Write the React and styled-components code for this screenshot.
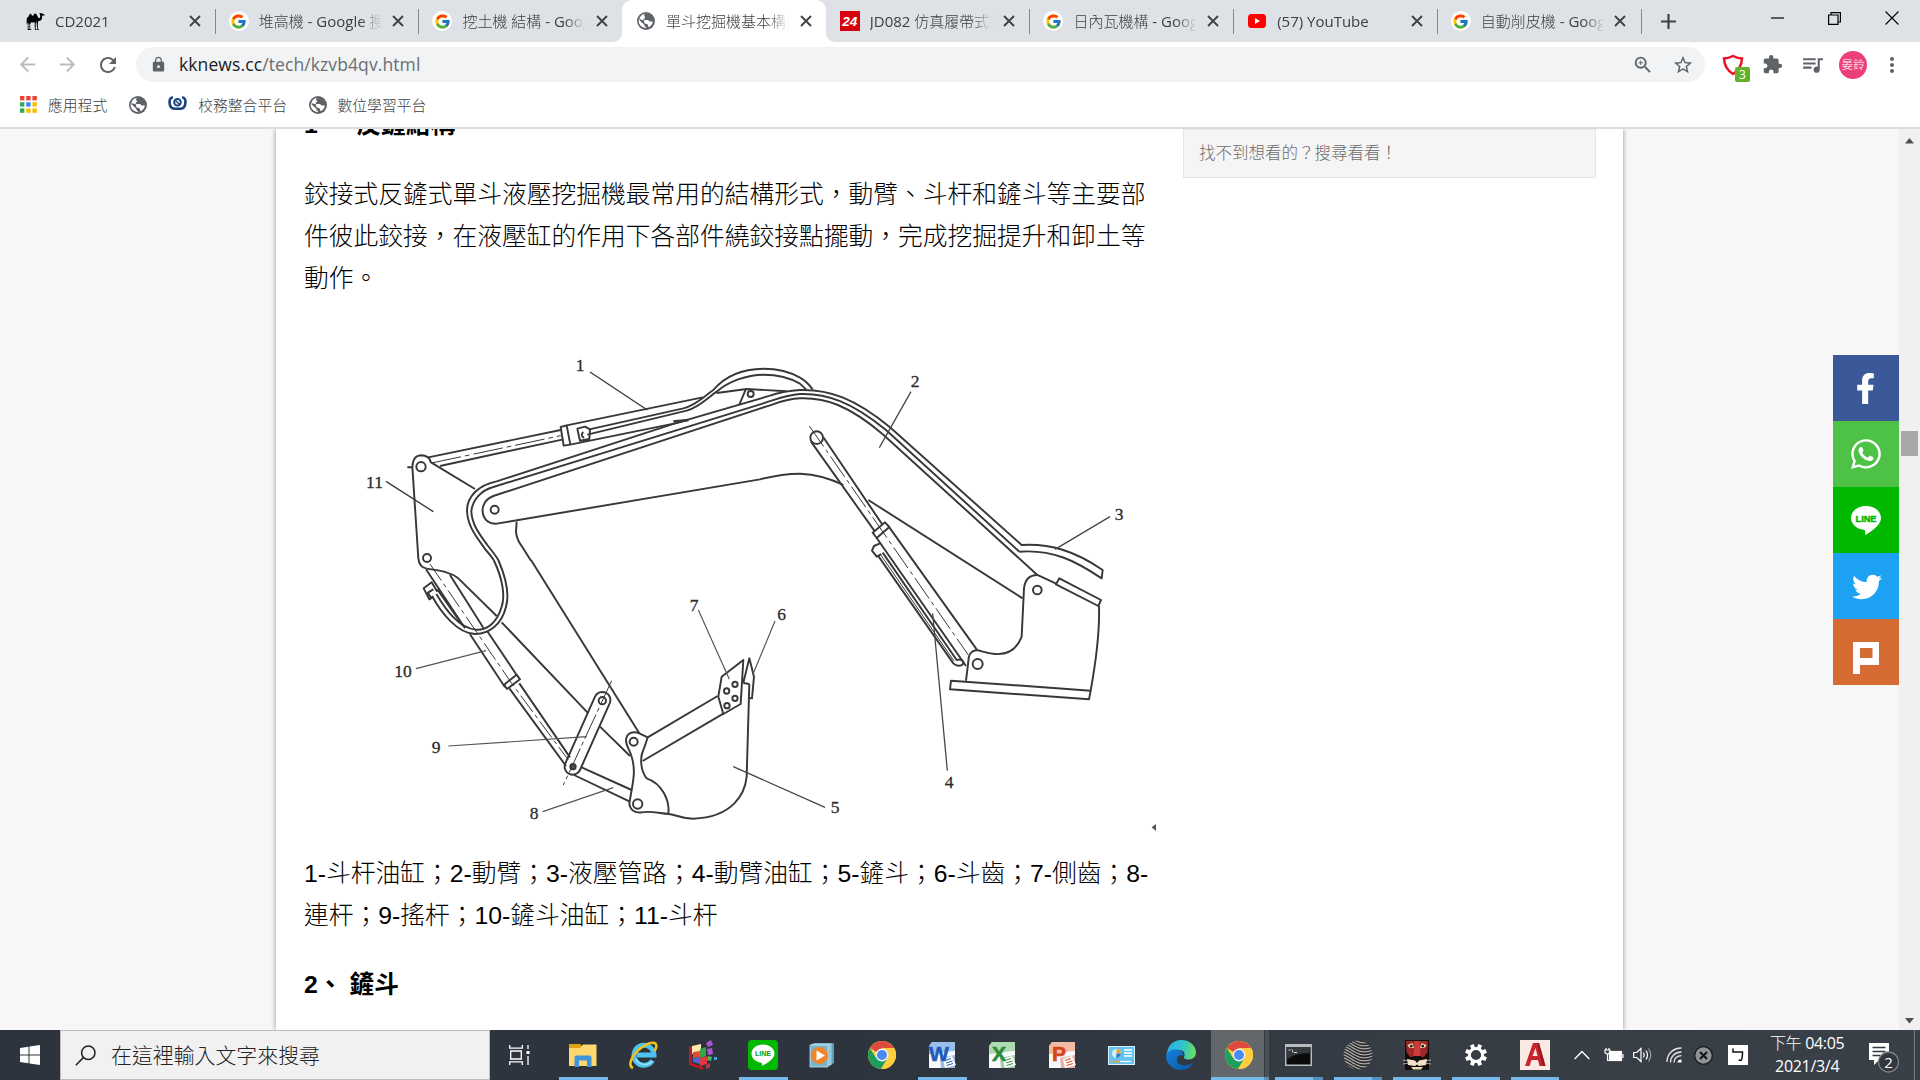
import React from "react";
import styled, { createGlobalStyle, css } from "styled-components";
import { FcGoogle } from "react-icons/fc";
import { FaFacebookF, FaWhatsapp, FaTwitter } from "react-icons/fa";
import { GiCamel } from "react-icons/gi";
import {
  MdArrowBack,
  MdArrowForward,
  MdRefresh,
  MdLock,
  MdZoomIn,
  MdStarBorder,
  MdExtension,
  MdQueueMusic,
  MdMoreVert,
} from "react-icons/md";

const Global = createGlobalStyle`
  * { box-sizing: border-box; }
  body { margin: 0; overflow: hidden; background: #fff; }
  svg { display: block; flex: none; }
`;

const uiFont = css`
  font-family: "Open Sans", "Noto Sans CJK TC Light", "Noto Sans CJK TC", sans-serif;
`;

const Desktop = styled.div`
  ${uiFont}
  width: 1920px;
  height: 1080px;
  display: flex;
  flex-direction: column;
  overflow: hidden;
  background: #fff;
`;

/* ---------- Tab strip ---------- */

const TabStrip = styled.div`
  display: flex;
  height: 42px;
  padding-left: 11px;
  background: #dee1e6;
`;

const Tab = styled.div`
  position: relative;
  display: flex;
  align-items: center;
  width: 203.7px;
  height: 42px;
  padding-left: 14px;
  background: ${(p) => (p.$active ? "#fff" : "transparent")};
  border-radius: 10px 10px 0 0;
  ${(p) =>
    p.$divider &&
    css`
      &::after {
        content: "";
        position: absolute;
        right: -1px;
        top: 9px;
        width: 1px;
        height: 25px;
        background: #85888d;
      }
    `}
  ${(p) =>
    p.$active &&
    css`
      &::before,
      &::after {
        content: "";
        position: absolute;
        bottom: 0;
        width: 9px;
        height: 9px;
      }
      &::before {
        left: -9px;
        background: radial-gradient(circle at 0 0, transparent 8.5px, #fff 9px);
      }
      &::after {
        right: -9px;
        background: radial-gradient(circle at 100% 0, transparent 8.5px, #fff 9px);
      }
    `}
`;

const Favicon = styled.div`
  display: flex;
  align-items: center;
  justify-content: center;
  width: 20px;
  height: 20px;
  flex: none;
  border-radius: ${(p) => (p.$round ? "50%" : "0")};
  background: ${(p) => p.$bg || "transparent"};
`;

const TabTitle = styled.div`
  width: 124px;
  margin-left: 10px;
  flex: none;
  overflow: hidden;
  white-space: nowrap;
  font-size: 15px;
  line-height: 22px;
  color: #3c4043;
  mask-image: linear-gradient(to right, #000 102px, transparent 123px);
`;

const CloseBox = styled.div`
  width: 20px;
  display: flex;
  justify-content: center;
  margin-left: 5.5px;
`;

const NewTab = styled.div`
  display: flex;
  align-items: center;
  padding-left: 20px;
`;

const WindowButtons = styled.div`
  display: flex;
  align-items: center;
  height: 36px;
  margin-left: auto;
`;

const WindowButton = styled.div`
  width: 57px;
  display: flex;
  justify-content: center;
`;

/* ---------- Toolbar ---------- */

const Toolbar = styled.div`
  display: flex;
  align-items: center;
  height: 45px;
  padding-left: 7px;
`;

const ToolButton = styled.div`
  position: relative;
  display: flex;
  align-items: center;
  justify-content: center;
  width: ${(p) => p.$w || 40}px;
  height: 35px;
  color: ${(p) => (p.$dim ? "#babcbe" : "#5f6368")};
`;

const Omnibox = styled.div`
  display: flex;
  align-items: center;
  width: 1569px;
  height: 35px;
  margin-left: 8px;
  padding-left: 14px;
  padding-right: 2px;
  border-radius: 18px;
  background: #f1f3f4;
  color: #5f6368;
`;

const Url = styled.div`
  flex: 1;
  margin-left: 12px;
  padding-bottom: 2px;
  font-size: 17.5px;
  letter-spacing: 0.1px;
  line-height: 26px;
  color: #6a6e73;
  white-space: nowrap;
`;

const UrlHost = styled.span`
  color: #202124;
`;

const ShieldSlot = styled(ToolButton)`
  padding-left: 9px;
`;

const ShieldBadge = styled.span`
  position: absolute;
  left: 30px;
  top: 20px;
  width: 15px;
  height: 15px;
  border-radius: 2px;
  background: #62b02c;
  color: #fff;
  font-size: 12px;
  line-height: 15px;
  text-align: center;
`;

const Avatar = styled.div`
  width: 28px;
  height: 28px;
  margin-left: 2px;
  border-radius: 50%;
  background: #ec407a;
  color: #fff;
  font-size: 11.5px;
  line-height: 28px;
  text-align: center;
  white-space: nowrap;
`;

/* ---------- Bookmarks ---------- */

const Bookmarks = styled.div`
  display: flex;
  align-items: center;
  height: 42px;
  padding: 0 0 5px 20px;
  border-bottom: 2px solid #dadce0;
`;

const Bookmark = styled.div`
  display: flex;
  align-items: center;
  gap: ${(p) => p.$gap || 11}px;
  margin-right: 21.5px;
  font-size: 14.8px;
  line-height: 22px;
  color: #3c4043;
  white-space: nowrap;
  font-weight: 300;
`;

/* ---------- Page ---------- */

const Viewport = styled.div`
  position: relative;
  display: flex;
  height: 901px;
  overflow: hidden;
  background: #f7f7f7;
`;

const Sheet = styled.main`
  display: flex;
  width: 1347px;
  height: 901px;
  margin-left: 276px;
  padding-left: 28px;
  background: #fff;
  box-shadow: 0 0 5px rgba(0, 0, 0, 0.42);
`;

const Article = styled.article`
  width: 852px;
  margin-top: -25px;
  font-family: "Liberation Sans", "Noto Sans CJK TC", sans-serif;
  font-size: 24.75px;
  line-height: 42px;
  color: #000;
`;

const Heading = styled.h3`
  margin: ${(p) => p.$margin || "0"};
  font-size: inherit;
  line-height: 42px;
  font-weight: 700;
`;

const Paragraph = styled.p`
  margin: ${(p) => p.$margin};
  font-weight: 300;
`;

const Figure = styled.figure`
  margin: 20px 0 0;
  height: 520px;
`;

const Aside = styled.aside`
  width: 413px;
  margin-left: 27px;
`;

const SiteSearch = styled.div`
  height: 49px;
  padding-left: 15px;
  border: 1px solid #e6e6e6;
  border-top-color: #ececec;
  background: #f5f5f5;
  color: #6c6c6c;
  font-family: "Liberation Sans", "Noto Sans CJK TC", sans-serif;
  font-size: 16.5px;
  font-weight: 300;
  line-height: 47px;
`;

const ScrollTrack = styled.div`
  display: flex;
  flex-direction: column;
  align-items: center;
  justify-content: space-between;
  width: 21px;
  height: 901px;
  margin-left: auto;
  padding: 9px 0 6px;
  background: #f0f0f0;
`;

const ScrollThumb = styled.div`
  width: 17px;
  height: 25px;
  margin-top: 287px;
  margin-bottom: auto;
  background: #a8a8a8;
`;

const ShareRail = styled.div`
  position: absolute;
  left: 1833px;
  top: 226px;
  display: flex;
  flex-direction: column;
`;

const ShareButton = styled.div`
  display: flex;
  align-items: center;
  justify-content: center;
  width: 66px;
  height: 66px;
  padding: ${(p) => p.$pad || "0"};
  color: #fff;
  background: ${(p) => p.$bg};
`;

/* ---------- Taskbar ---------- */

const Taskbar = styled.div`
  display: flex;
  height: 50px;
  background: linear-gradient(to right, #2d343e 0, #2d343e 45%, #373d45 75%, #3a4048 100%);
`;

const StartButton = styled.div`
  display: flex;
  align-items: center;
  justify-content: center;
  width: 60px;
`;

const TaskSearch = styled.div`
  display: flex;
  align-items: center;
  width: 430px;
  height: 50px;
  padding-left: 14px;
  gap: 15px;
  border: 1px solid #bcbcbc;
  background: #f1f1f1;
  color: #222;
  font-size: 20.9px;
  font-weight: 300;
  line-height: 30px;
  white-space: nowrap;
`;

const TaskItem = styled.div`
  position: relative;
  display: flex;
  align-items: center;
  justify-content: center;
  width: ${(p) => p.$w}px;
  height: 50px;
  padding-right: ${(p) => p.$pad || 0}px;
`;

const ActiveTask = styled(TaskItem)`
  background: linear-gradient(to right, #62676c 0 53px, #363b40 53px 54px, #4b5056 54px);
`;

const Underline = styled.span`
  position: absolute;
  bottom: 0;
  left: ${(p) => p.$left}px;
  width: ${(p) => p.$width}px;
  height: 3px;
  background: ${(p) =>
    p.$split
      ? `linear-gradient(to right, #76b9ed 0 ${p.$split}px, #5a8fb9 ${p.$split}px)`
      : "#76b9ed"};
`;

const TrayItem = styled.div`
  display: flex;
  align-items: center;
  justify-content: center;
  width: ${(p) => p.$w}px;
  height: 50px;
`;

const Clock = styled.div`
  width: 96px;
  padding-top: 2px;
  color: #fff;
  font-size: 16px;
  line-height: 22.5px;
  letter-spacing: -0.3px;
  text-align: center;
  white-space: nowrap;
`;

const ShowDesktop = styled.div`
  width: 6px;
  height: 50px;
  margin-left: auto;
  border-left: 1px solid #7a7f85;
`;

/* ---------- Small drawings ---------- */

const Cross = () => (
  <svg width="12" height="12" viewBox="0 0 12 12" stroke="#3f4347" strokeWidth="1.9">
    <path d="M1 1L11 11M11 1L1 11" />
  </svg>
);

const Globe = () => (
  <svg width="18" height="18" viewBox="0 0 18 18">
    <circle cx="9" cy="9" r="9" fill="#5f6368" />
    <path
      d="M9.7 1.8C7 2 6.4 3.4 7.6 4.4c1 .7.2 1.8-.6 2-.9.3-.6 1.6.5 1.6h3c1.400 0 1.500 1.500 2.400 1.500h2.900c-.2 2.700-2 4.800-4.200 5.700-.7-.8-.4-2-1-2.600-.8-.9-2.600-.5-3.300-1.600-.5-.9.300-1.900-.4-2.700L2 6.900A7.300 7.300 0 0 0 9 16.300v-1.400c-1.300-.2-1.700-1.300-1.700-2.200L2.400 8.200C2.300 4.600 5.600 1.500 9.700 1.800z"
      fill="#fff"
      fillRule="evenodd"
    />
  </svg>
);

const YouTubeIcon = () => (
  <svg width="18" height="14" viewBox="0 0 18 14">
    <rect width="18" height="14" rx="3.500" fill="#f00" />
    <path d="M7 4l5 3-5 3z" fill="#fff" />
  </svg>
);

const News24 = () => (
  <svg width="20" height="20" viewBox="0 0 20 20">
    <rect width="20" height="20" fill="#d7000f" />
    <text x="9.800" y="14.800" textAnchor="middle" fontFamily="Liberation Sans, sans-serif" fontWeight="700" fontStyle="italic" fontSize="13.500" fill="#fff">24</text>
  </svg>
);

const AppsGrid = () => (
  <svg width="17" height="17" viewBox="0 0 17 17">
    {["#ea4335", "#ea4335", "#ea4335", "#34a853", "#4285f4", "#fbbc05", "#34a853", "#fbbc05", "#fbbc05"].map((c, i) => (
      <rect key={i} x={(i % 3) * 6.200} y={Math.floor(i / 3) * 6.200} width="4.400" height="4.400" fill={c} />
    ))}
  </svg>
);

const SchoolIcon = () => (
  <svg width="19" height="17" viewBox="0 0 19 17" fill="none" stroke="#17427c">
    <path d="M5 1.500C0 1 .5 12 6 12.800h7C18.500 12 19 1 14 1.500" strokeWidth="2.600" />
    <circle cx="9.500" cy="6.300" r="3.300" strokeWidth="1.900" />
    <path d="M7.500 4.500l4 4" strokeWidth="1.500" />
  </svg>
);

const LineBubble = ({ size, green }) => (
  <svg width={size} height={size} viewBox="0 0 30 30">
    <path d="M15 1C6.700 1 0 6.300 0 13c0 6 5.500 10.800 12.700 11.800 1.500.3 1.700 1 1.300 4.200 0 .8.500 1 1.300.5C21 26 30 20 30 13 30 6.300 23.300 1 15 1z" fill="#fff" />
    <text x="15" y="16.600" textAnchor="middle" fontFamily="Liberation Sans, sans-serif" fontWeight="700" fontSize="9.500" textLength="21" lengthAdjust="spacingAndGlyphs" fill={green} stroke={green} strokeWidth=".5">LINE</text>
  </svg>
);

const PlurkIcon = () => (
  <svg width="26" height="32" viewBox="0 0 26 32">
    <path d="M0 0h26v23H7v9H0zM7 6v10h12.500V6z" fill="#fff" fillRule="evenodd" />
  </svg>
);

const ChromeIcon = () => (
  <svg width="28" height="28" viewBox="0 0 28 28">
    <circle cx="14" cy="14" r="14" fill="#ffcd40" />
    <path d="M14 14L1.900 7A14 14 0 0 1 26.100 7z" fill="#dd4b3e" />
    <path d="M1.900 7A14 14 0 0 0 13 28l6.500-11L14 14 8 17z" fill="#1a9f5c" />
    <path d="M14 7h12.100A14 14 0 0 1 13 28l7-10.500z" fill="#ffcd40" />
    <circle cx="14" cy="14" r="6.400" fill="#f4f4f4" />
    <circle cx="14" cy="14" r="5" fill="#4a8af4" />
  </svg>
);

const OfficeIcon = ({ letter, color, light }) => (
  <svg width="28" height="28" viewBox="0 0 28 28">
    <path d="M4 1h23v26H1V5z" fill="#f8fafc" />
    <path d="M4 1h23v9C18 10 12 13 1 13V5z" fill={light} opacity=".6" />
    <path d="M12 17l15-3v13H13z" fill={color} opacity=".4" />
    <path d="M15 18l9-3 4 9-11 3z" fill="#fff" />
    <path d="M17 19.500l6-2M18 22l6.500-2M18.500 24.500l6.500-2" stroke={color} strokeWidth="1" />
    <text x="11" y="20" textAnchor="middle" fontFamily="Liberation Sans, sans-serif" fontWeight="700" fontSize="21" fill={color} stroke={color} strokeWidth=".6">{letter}</text>
  </svg>
);

const FolderIcon = () => (
  <svg width="28" height="24" viewBox="0 0 28 24">
    <path d="M0 1h11l2 3h-1v19H1z" fill="#e4a20b" />
    <path d="M0 5h11l3-3.500h13.500V23H0z" fill="#fed76e" />
    <path d="M5.500 24V14.500q0-2 2-2h13q2 0 2 2V24h-4.500v-6.500h-8V24z" fill="#3f95d8" />
    <path d="M0 1h11l1.500 1.500L10.500 5H0z" fill="#e0a010" />
  </svg>
);

const ExplorerIcon = () => (
  <svg width="31" height="30" viewBox="0 0 31 30" fill="none">
    <path d="M24.500 20.500A10 10 0 1 1 26 15H9" stroke="#4cc3f0" strokeWidth="5" />
    <path d="M24 21A9.500 9.500 0 0 1 8 19" stroke="#9be4fb" strokeWidth="1.500" />
    <path d="M5 28C-2 25 6 12 16 6c8-5 14-4 12 2-.3 1-.8 2-1.500 3" stroke="#f3c11b" strokeWidth="2.600" />
  </svg>
);

const BlocksIcon = () => (
  <svg width="28" height="30" viewBox="0 0 28 30">
    <path d="M0 7l3-1v17l11 4v3L0 25z" fill="#b81c25" />
    <path d="M3 6l9-2v8l-9 2z" fill="#ffe9b0" />
    <path d="M4 12l7-1v6l-7 1z" fill="#e94b2d" />
    <path d="M11 9l6-2v9l-6 2z" fill="#35a548" />
    <path d="M4 18l7-1v7l-7-2z" fill="#4968d3" />
    <path d="M11 18l7-2v8l-7 2z" fill="#e03841" />
    <path d="M17 3l5-3 2 5-5 2zM18 9l5-1 1 6-5 1z" fill="#ad55d6" />
    <path d="M19 16l4 1-1 4-4-1z" fill="#49b857" />
    <rect x="25" y="17" width="3" height="3" fill="#37a6dc" />
    <path d="M17 25l4-2v4l-4 2z" fill="#bc3c46" />
  </svg>
);

const LineTaskIcon = () => (
  <svg width="30" height="30" viewBox="0 0 30 30">
    <rect width="30" height="30" rx="4" fill="#00b900" />
    <path d="M15 4.500C8.400 4.500 3.500 8.600 3.500 13.700c0 4.800 4.200 8 9.600 9 1 .3 1 1 .8 3 3.600-1.500 12.600-6.500 12.600-12 0-5.100-4.900-9.200-11.500-9.200z" fill="#fff" />
    <text x="15" y="16.300" textAnchor="middle" fontFamily="Liberation Sans, sans-serif" fontWeight="700" fontSize="7" textLength="16" lengthAdjust="spacingAndGlyphs" fill="#00a000">LINE</text>
  </svg>
);

const MediaIcon = () => (
  <svg width="26" height="26" viewBox="0 0 26 26">
    <path d="M5 1h19l1 1v19l-5 3H5z" fill="#5f9db9" />
    <path d="M3 2h19v21H3z" fill="#8dc3d8" stroke="#b9dfeb" strokeWidth=".7" />
    <path d="M1 3h18v22H1z" fill="#79b4cd" stroke="#c6e5ef" strokeWidth=".8" />
    <circle cx="10.500" cy="13.500" r="8.500" fill="#f18426" />
    <path d="M7.500 8.500l8.500 5-8.500 5z" fill="#fff" />
  </svg>
);

const PanelIcon = () => (
  <svg width="27" height="19" viewBox="0 0 27 19">
    <rect x=".5" y=".5" width="26" height="18" fill="#63c4f5" stroke="#d9f0fb" />
    <circle cx="8.500" cy="7.500" r="4.500" fill="#d9f0fb" />
    <path d="M8.500 7.500V3a4.500 4.500 0 0 1 4.500 4.500z" fill="#f1a42b" />
    <path d="M8.500 7.500L13 7.500A4.500 4.500 0 0 1 8 12z" fill="#2a7fc0" />
    <path d="M16 4h8M16 7h8M16 10h8" stroke="#fff" strokeWidth="1.400" />
    <path d="M3 15.500h8" stroke="#f1a42b" strokeWidth="1.500" />
    <path d="M12 15.500h11" stroke="#fff" strokeWidth="1.200" />
  </svg>
);

const EdgeIcon = () => (
  <svg width="30" height="30" viewBox="0 0 30 30">
    <defs>
      <linearGradient id="edgeTop" x1="0" y1=".3" x2="1" y2=".4">
        <stop offset="0" stopColor="#2bb1e8" />
        <stop offset=".55" stopColor="#2fc3d0" />
        <stop offset="1" stopColor="#6be05a" />
      </linearGradient>
      <linearGradient id="edgeLow" x1="0" y1="0" x2="1" y2="1">
        <stop offset="0" stopColor="#1580d8" />
        <stop offset="1" stopColor="#0d57a8" />
      </linearGradient>
    </defs>
    <path d="M1 13C2 5 8 0 15 0c9 0 15 6 15 12.500 0 4.500-3.500 7-7.500 7-3 0-5-1.200-4.500-2.500 1.500-2.500.5-7-5-7C7 10 2 12 0 17z" fill="url(#edgeTop)" />
    <path d="M0 16C2 10 8 9 12 9.800c4 .7 6 4.200 5 6.200-1.500-2-6-1-6 3.500 0 5.500 7 8 16 3.500C24 28 20 30 15 30 6 30 0 23 0 16z" fill="url(#edgeLow)" />
  </svg>
);

const ConsoleIcon = () => (
  <svg width="27" height="22" viewBox="0 0 27 22">
    <rect width="27" height="22" fill="#b9bcbf" />
    <rect x="1.500" y="3" width="24" height="17.500" fill="#0b0b0b" />
    <path d="M1.500 3h24v6C14 9 6 12 1.500 16z" fill="#36393c" />
    <path d="M3.500 6h2M7 5.500l1 3M9 8.500h3" stroke="#ddd" strokeWidth="1" />
  </svg>
);

const SphereIcon = () => (
  <svg width="30" height="30" viewBox="0 0 30 30">
    <defs>
      <clipPath id="ball"><circle cx="15" cy="15" r="14.500" /></clipPath>
    </defs>
    <circle cx="15" cy="15" r="14.500" fill="#2a2a2a" />
    <g clipPath="url(#ball)" fill="none" stroke="#aaa" strokeWidth="1.200">
      {[-2, -1, 0, 1, 2, 3, 4, 5, 6, 7, 8, 9].map((n) => (
        <path key={n} d={`M-4 ${n * 3}C6 ${n * 3 - 4} 12 ${n * 3 + 16} 32 ${n * 3 + 6}`} />
      ))}
    </g>
  </svg>
);

const LionIcon = () => (
  <svg width="28" height="30" viewBox="0 0 28 30">
    <rect x="2" width="24" height="30" fill="#160c0b" />
    <path d="M3 1h22l-.5 11-3.500 5h-4l-1 2h-4l-1-2H7l-3.500-5z" fill="#9c2828" />
    <path d="M11.500 1h5l1 16h-7z" fill="#cc3a3a" />
    <path d="M4.500 5l5-2 1.500 5-5-.5zM23.500 5l-5-2L17 8l5-.5z" fill="#ead7b0" />
    <circle cx="8.300" cy="6" r="1.300" fill="#111" />
    <circle cx="19.700" cy="6" r="1.300" fill="#111" />
    <path d="M9.500 16h9l-2.500 4.500h-4z" fill="#111" />
    <path d="M4 19l8 1.500 2 2.500 2-2.500 8-1.500-1 6-7 1-2-1.500-2 1.500-7-1z" fill="#f1e4c6" />
    <path d="M8 27h12l-2 2.500h-8z" fill="#e8d7b5" />
    <path d="M0 20l6 1M0 24l6-1M28 20l-6 1M28 24l-6-1" stroke="#ddd" strokeWidth=".7" />
  </svg>
);

const GearIcon = () => (
  <svg width="24" height="24" viewBox="0 0 24 24">
    {[0, 45, 90, 135, 180, 225, 270, 315].map((a) => (
      <rect key={a} x="10" y="1" width="4" height="5" fill="#fff" transform={`rotate(${a + 22.500} 12 12)`} />
    ))}
    <circle cx="12" cy="12" r="6.600" fill="none" stroke="#fff" strokeWidth="3" />
  </svg>
);

const AutoCadIcon = () => (
  <svg width="30" height="30" viewBox="0 0 30 30">
    <rect width="30" height="30" fill="#fbe9e3" />
    <path d="M5 26L13 3h6l6.500 23h-6l-1.500-6h-6.500l-2 6zM12.500 16h5L15.500 8z" fill="#c8252c" fillRule="evenodd" />
    <path d="M17 3h2l6.500 23h-3z" fill="#961a20" />
  </svg>
);

/* ---------- Excavator linkage drawing ---------- */

const Excavator = () => (
  <svg width="852" height="520" viewBox="304 320 852 520" fill="none" stroke="#383838" strokeWidth="5.800" strokeLinejoin="round">
    {/* stick cylinder, rear plate and left half of the boom */}
    <g transform="translate(350 340) scale(.33333)">
      <path d="M1350 175C1310 177 1290 186 1250 199L430 468C405 478 396 498 398 515C400 540 418 552 440 551L1230 418C1280 405 1310 401 1350 401" />
      <path d="M1350 150C1315 152 1295 155 1260 167L975 250L440 424C385 435 352 470 351 510C352 560 380 590 405 627Q425 650 431 660" />
      <path d="M1350 162C1305 165 1280 178 1240 190L430 441C395 450 366 480 364 515C366 555 390 585 412 615Q438 648 445 660" />
      <circle cx="434" cy="509" r="12" />
      <path d="M243 368C240 355 232 346 213 346C196 347 184 360 188 395L205 655C207 675 215 683 230 686M243 367L375 447M172 382H190" />
      <circle cx="213" cy="380" r="14" />
      <circle cx="231" cy="654" r="12" />
      <path d="M235 352L632 270M270 378L640 298" />
      <path d="M245 369L632 287" strokeWidth="3" strokeDasharray="90 12 14 12" />
      <path d="M632 261L650 256L661 314L641 317ZM650 256L1058 172M661 314L975 250L1015 240M682 266L705 260L720 268L718 297L690 302ZM700 276Q690 284 702 294" />
      <path d="M718 268L1000 205C1040 195 1060 170 1090 150C1125 108 1180 87 1240 86C1290 86 1325 98 1350 113" />
      <path d="M712 284L1010 212C1050 200 1070 175 1100 155C1135 125 1190 104 1240 104C1290 104 1325 116 1350 131" />
      <path d="M970 244L1015 240" strokeWidth="7" />
      <path d="M1100 159L1190 147L1310 154M1187 149L1168 194" />
      <circle cx="1202" cy="162" r="9" />
      <path d="M500 545L498 575C500 600 508 608 515 618L543 662" />
      <path d="M720 96L892 210M108 424L250 515" strokeWidth="4" />
    </g>
    {/* bucket, links and bucket cylinder */}
    <g transform="translate(350 560) scale(.33333)">
      <path d="M445 0C475 70 477 110 468 140C455 195 415 223 375 222C320 220 272 155 246 108" />
      <path d="M431 0C460 60 465 110 455 140C440 190 410 211 378 209C325 205 285 145 259 102" />
      <path d="M262 95L245 67L221 85L238 118L250 110M250 88L234 98L242 112" />
      <path d="M230 26C270 32 300 35 325 55L440 168M455 187L715 460M750 500L840 588" />
      <path d="M228 28L345 205M360 223L465 382M300 45L400 203M413 215L500 345M262 88L338 196" />
      <path d="M240 12L485 370L655 600" strokeWidth="3" strokeDasharray="60 12 12 12" />
      <path d="M462 374L500 344L510 358L471 387Z" />
      <path d="M478 385L648 618M508 370L660 592" />
      <path d="M779 430L690 630A24 24 0 0 1 646 610L735 410A24 24 0 0 1 779 430Z" />
      <circle cx="757" cy="422" r="11" />
      <circle cx="669" cy="620" r="8" fill="#555" />
      <path d="M785 362L640 675" strokeWidth="3" strokeDasharray="80 10 12 10" />
      <path d="M695 622L845 690M672 645L838 724M543 0L868 520" />
      <path d="M893 532L868 520C850 512 830 518 828 540C828 560 840 570 845 590C857 630 850 660 845 690L838 730C840 750 855 760 875 757C900 752 930 760 955 762C960 720 935 670 890 655C870 630 870 590 880 570C888 550 890 540 893 532Z" />
      <circle cx="851" cy="545" r="12" />
      <circle cx="863" cy="732" r="14" />
      <path d="M893 532L1103 408M878 603L1120 461M1198 372L1190 650C1185 700 1150 772 1030 776C990 776 975 762 955 762" />
      <path d="M1180 300L1115 350L1105 410L1120 462L1172 432ZM1180 368L1198 295L1212 350L1206 415L1198 415M1180 369L1198 372" />
      {[[1130, 393], [1155, 373], [1131, 437], [1155, 415]].map(([x, y]) => (
        <circle key={`${x}-${y}`} cx={x} cy={y} r="8" />
      ))}
      <path d="M198 326L408 272M295 558L710 530M578 755L790 683M1045 150L1138 358M1275 183L1208 345" strokeWidth="3.500" stroke="#555" />
    </g>
    {/* right half of the boom, boom cylinder and base bracket */}
    <g transform="translate(750 350) scale(.33333)">
      <path d="M150 83Q170 94 188 118M150 101L168 118" />
      <path d="M150 120C235 117 315 145 420 232L815 585C900 580 975 603 1058 660L1055 685C975 632 910 598 808 605" />
      <path d="M150 132C230 129 305 156 408 240L808 605" />
      <path d="M150 145C225 142 295 165 400 254L862 675" />
      <path d="M150 371C200 373 240 385 280 405M355 450L818 745" />
      <circle cx="200" cy="263" r="19" />
      <path d="M183 275L375 545M220 262L398 525M368 548L405 517L418 531L380 564ZM380 564L648 948M418 532L680 898" />
      <path d="M178 228L655 915" strokeWidth="3" strokeDasharray="75 12 12 12" />
      <path d="M390 580L372 588L366 602L380 620L394 612M384 617L610 940C622 952 642 948 640 935M398 608L620 930Q634 925 640 935" />
      <path d="M391 613L612 933" strokeWidth="3" />
      <path d="M920 702L862 675C835 675 825 690 822 715L815 860C800 900 770 915 735 912C710 910 695 903 680 900C660 903 655 915 655 935L648 992M928 685L1053 750L1045 768L918 703ZM1047 768C1050 860 1035 950 1022 1022M603 992L1022 1022L1017 1048L600 1018Z" />
      <circle cx="862" cy="720" r="13" />
      <circle cx="683" cy="942" r="15" />
      <path d="M483 125L388 293M1080 500L915 598M548 790L592 1262M-50 1250L225 1372" strokeWidth="3.800" stroke="#444" />
      <path d="M1205 1432L1218 1422V1443Z" fill="#555" stroke="none" />
    </g>
    <g fill="#2b2b2b" stroke="#2b2b2b" strokeWidth=".3" fontFamily="Liberation Serif, serif" fontSize="17.500" textAnchor="middle">
      <text x="580" y="371">1</text>
      <text x="915" y="387">2</text>
      <text x="1119" y="520">3</text>
      <text x="949" y="788">4</text>
      <text x="835" y="813">5</text>
      <text x="781.500" y="620">6</text>
      <text x="694" y="611">7</text>
      <text x="534" y="819">8</text>
      <text x="436" y="752.500">9</text>
      <text x="403" y="677">10</text>
      <text x="374.500" y="487.500">11</text>
    </g>
  </svg>
);

/* ---------- Data ---------- */

const google = { icon: <FcGoogle size={17} />, bg: "#fff", round: true };
const tabs = [
  { title: "CD2021", icon: <GiCamel size={19} color="#000" />, divider: true },
  { title: "堆高機 - Google 搜尋", ...google, divider: true },
  { title: "挖土機 結構 - Google 搜尋", ...google },
  { title: "單斗挖掘機基本構造", icon: <Globe />, active: true },
  { title: "JD082 仿真履帶式挖", icon: <News24 />, divider: true },
  { title: "日內瓦機構 - Google 搜尋", ...google, divider: true },
  { title: "(57) YouTube", icon: <YouTubeIcon />, divider: true },
  { title: "自動削皮機 - Google 搜尋", ...google, divider: true },
];

const tasks = [
  { icon: <FolderIcon />, line: true },
  { icon: <ExplorerIcon /> },
  { icon: <BlocksIcon /> },
  { icon: <LineTaskIcon />, line: true },
  { icon: <MediaIcon /> },
  { icon: <ChromeIcon /> },
  { icon: <OfficeIcon letter="W" color="#1f5bb5" light="#5d97dd" />, line: true },
  { icon: <OfficeIcon letter="X" color="#2f8a3a" light="#7cc47f" /> },
  { icon: <OfficeIcon letter="P" color="#d2471d" light="#f0906a" /> },
  { icon: <PanelIcon /> },
  { icon: <EdgeIcon /> },
];

const laterTasks = [
  { icon: <ConsoleIcon />, left: 6, width: 48, split: 38 },
  { icon: <SphereIcon />, left: 6, width: 48, split: 38 },
  { icon: <LionIcon />, left: 6, width: 48 },
  { icon: <GearIcon />, left: 6, width: 48 },
  { icon: <AutoCadIcon />, left: 6, width: 48 },
];

export default function App() {
  return (
    <Desktop lang="zh-Hant-TW">
      <Global />
      <TabStrip>
        {tabs.map((t) => (
          <Tab key={t.title} $active={t.active} $divider={t.divider}>
            <Favicon $bg={t.bg} $round={t.round}>{t.icon}</Favicon>
            <TabTitle>{t.title}</TabTitle>
            <CloseBox><Cross /></CloseBox>
          </Tab>
        ))}
        <NewTab>
          <svg width="15" height="15" viewBox="0 0 15 15" stroke="#3f4347" strokeWidth="2.200">
            <path d="M7.500 0V15M0 7.500H15" />
          </svg>
        </NewTab>
        <WindowButtons>
          <WindowButton>
            <svg width="13" height="13" viewBox="0 0 13 13"><path d="M0 6h13" stroke="#000" strokeWidth="1.200" /></svg>
          </WindowButton>
          <WindowButton>
            <svg width="13" height="13" viewBox="0 0 13 13" fill="none" stroke="#000" strokeWidth="1.200">
              <path d="M.6 3h9.400v9.400H.6zM3 3V.6h9.400V10H10" />
            </svg>
          </WindowButton>
          <WindowButton>
            <svg width="14" height="14" viewBox="0 0 14 14" stroke="#000" strokeWidth="1.100"><path d="M.5.5l13 13M13.500.5l-13 13" /></svg>
          </WindowButton>
        </WindowButtons>
      </TabStrip>

      <Toolbar>
        <ToolButton $dim><MdArrowBack size={23} /></ToolButton>
        <ToolButton $dim><MdArrowForward size={23} /></ToolButton>
        <ToolButton $w={41}><MdRefresh size={24} /></ToolButton>
        <Omnibox>
          <MdLock size={17} />
          <Url><UrlHost>kknews.cc</UrlHost>/tech/kzvb4qv.html</Url>
          <ToolButton><MdZoomIn size={22} /></ToolButton>
          <ToolButton><MdStarBorder size={22} /></ToolButton>
        </Omnibox>
        <ShieldSlot $w={47}>
          <svg width="22" height="22" viewBox="0 0 22 22" fill="none" stroke="#ea1226" strokeWidth="2.500">
            <path d="M11 20C6 17 2.500 13 2 4.500C6 4.500 8 3.500 11 2C14 3.500 16 4.500 20 4.500C19.500 13 16 17 11 20Z" />
          </svg>
          <ShieldBadge>3</ShieldBadge>
        </ShieldSlot>
        <ToolButton><MdExtension size={21} /></ToolButton>
        <ToolButton><MdQueueMusic size={25} /></ToolButton>
        <ToolButton><Avatar>晏鈴</Avatar></ToolButton>
        <ToolButton><MdMoreVert size={24} /></ToolButton>
      </Toolbar>

      <Bookmarks>
        <Bookmark><AppsGrid />應用程式</Bookmark>
        <Bookmark><Globe /></Bookmark>
        <Bookmark><SchoolIcon />校務整合平台</Bookmark>
        <Bookmark><Globe />數位學習平台</Bookmark>
      </Bookmarks>

      <Viewport>
        <Sheet>
          <Article>
            <Heading>1、 &nbsp;反鏟結構</Heading>
            <Paragraph $margin="28px 0 0">
              鉸接式反鏟式單斗液壓挖掘機最常用的結構形式，動臂、斗杆和鏟斗等主要部<br />
              件彼此鉸接，在液壓缸的作用下各部件繞鉸接點擺動，完成挖掘提升和卸土等<br />
              動作。
            </Paragraph>
            <Figure><Excavator /></Figure>
            <Paragraph $margin="13px 0 0">
              1-斗杆油缸；2-動臂；3-液壓管路；4-動臂油缸；5-鏟斗；6-斗齒；7-側齒；8-<br />
              連杆；9-搖杆；10-鏟斗油缸；11-斗杆
            </Paragraph>
            <Heading $margin="27px 0 0">2、 鏟斗</Heading>
          </Article>
          <Aside>
            <SiteSearch>找不到想看的？搜尋看看！</SiteSearch>
          </Aside>
        </Sheet>
        <ScrollTrack>
          <svg width="9" height="6" viewBox="0 0 9 6"><path d="M0 5.500L4.500 0L9 5.500z" fill="#505050" /></svg>
          <ScrollThumb />
          <svg width="9" height="6" viewBox="0 0 9 6"><path d="M0 0L4.500 5.500L9 0z" fill="#505050" /></svg>
        </ScrollTrack>
        <ShareRail>
          <ShareButton $bg="#3b5998" $pad="0 2px 0 0"><FaFacebookF size={31} /></ShareButton>
          <ShareButton $bg="#4dc247"><FaWhatsapp size={34} /></ShareButton>
          <ShareButton $bg="#00b900"><LineBubble size={30} green="#00b900" /></ShareButton>
          <ShareButton $bg="#1da1f2" $pad="2px 0 0 2px"><FaTwitter size={30} /></ShareButton>
          <ShareButton $bg="#d56a32" $pad="11px 0 0"><PlurkIcon /></ShareButton>
        </ShareRail>
      </Viewport>

      <Taskbar>
        <StartButton>
          <svg width="20" height="20" viewBox="0 0 20 20" fill="#fff">
            <path d="M0 3l8.500-1.200v7.700H0zM9.500 1.600L20 0v9.500H9.500zM0 10.500h8.500v7.700L0 17zM9.500 10.500H20V20L9.500 18.400z" />
          </svg>
        </StartButton>
        <TaskSearch>
          <svg width="21" height="21" viewBox="0 0 21 21" fill="none" stroke="#222" strokeWidth="1.500">
            <circle cx="13.300" cy="7.700" r="6.700" />
            <path d="M8.600 12.400L.8 20.200" />
          </svg>
          在這裡輸入文字來搜尋
        </TaskSearch>
        <TaskItem $w={63.4} $pad={5}>
          <svg width="21" height="20" viewBox="0 0 21 20" fill="none" stroke="#fff" strokeWidth="1.300">
            <path d="M.7 0v3.200h12.600V0M1.700 6h10.600v8H1.700zM.7 20v-3.200h12.600V20M19 0v4M19 11v9" />
            <rect x="17.500" y="6" width="3" height="3" fill="#fff" stroke="none" />
          </svg>
        </TaskItem>
        {tasks.map((t, i) => (
          <TaskItem key={i} $w={59.8}>
            {t.icon}
            {t.line && <Underline $left={6} $width={49} />}
          </TaskItem>
        ))}
        <ActiveTask $w={58} $pad={2}>
          <ChromeIcon />
          <Underline $left={0} $width={58} $split={53} />
        </ActiveTask>
        {laterTasks.map((t, i) => (
          <TaskItem key={i} $w={59}>
            {t.icon}
            <Underline $left={t.left} $width={t.width} $split={t.split} />
          </TaskItem>
        ))}
        <TrayItem $w={36}>
          <svg width="16" height="10" viewBox="0 0 16 10" fill="none" stroke="#fff" strokeWidth="1.400"><path d="M.7 9L8 1.500L15.300 9" /></svg>
        </TrayItem>
        <TrayItem $w={28}>
          <svg width="20" height="14" viewBox="0 0 20 14" fill="none" stroke="#fff" strokeWidth="1.200">
            <rect x="5.500" y="3.500" width="12" height="9" fill="#fff" />
            <path d="M19 6v4M3.500 6v6.500H6M1 2h5v2.500Q3.500 7.500 1 4.500zM2 0v2M5 0v2" />
          </svg>
        </TrayItem>
        <TrayItem $w={30}>
          <svg width="20" height="16" viewBox="0 0 20 16" fill="none" stroke="#fff" strokeWidth="1.200">
            <path d="M.7 5.500h3L8 1.500v13L3.700 10.500h-3zM10.500 5.500q1.500 2.500 0 5M13 3.500q3 4.500 0 9" />
            <path d="M15.500 1.500q4.500 6.500 0 13" stroke="#9a9da1" />
          </svg>
        </TrayItem>
        <TrayItem $w={31}>
          <svg width="16" height="16" viewBox="0 0 16 16" fill="none" stroke="#e8e8e8" strokeWidth="1.300">
            <path d="M1 15C1 7 7 1 15.500 1M4.500 15.500C4.500 9.500 9 5 15.500 5M8 15.500C8 11.500 11 8.700 15.500 8.700" />
            <path d="M11.500 15.500Q11.500 12.500 15.500 12.500V15.500z" fill="#fff" stroke="none" />
          </svg>
        </TrayItem>
        <TrayItem $w={28}>
          <svg width="19" height="19" viewBox="0 0 19 19">
            <circle cx="9.500" cy="9.500" r="8.800" fill="#8f9397" stroke="#15181c" strokeWidth="1.200" />
            <path d="M6 6l7 7M13 6l-7 7" stroke="#111" strokeWidth="1.900" />
          </svg>
        </TrayItem>
        <TrayItem $w={42}>
          <svg width="20" height="20" viewBox="0 0 20 20">
            <rect width="20" height="20" fill="#fff" />
            <path d="M5 3.500V7H14.500Q14.500 14 13 15.500L10.500 15" fill="none" stroke="#111" strokeWidth="1.500" />
          </svg>
        </TrayItem>
        <Clock>下午 04:05<br />2021/3/4</Clock>
        <TrayItem $w={56}>
          <svg width="34" height="36" viewBox="0 0 34 36">
            <path d="M3 6h20v17H13l-5 5v-5H3z" fill="#fff" />
            <path d="M6.500 10.500h13M6.500 14.500h13M6.500 18.500h8" stroke="#333940" strokeWidth="1.300" />
            <circle cx="22.500" cy="25" r="10" fill="#33383e" stroke="#7b8086" strokeWidth="1.300" />
            <text x="22.500" y="30.500" textAnchor="middle" fontFamily="Open Sans, sans-serif" fontSize="15" fill="#fff">2</text>
          </svg>
        </TrayItem>
        <ShowDesktop />
      </Taskbar>
    </Desktop>
  );
}
